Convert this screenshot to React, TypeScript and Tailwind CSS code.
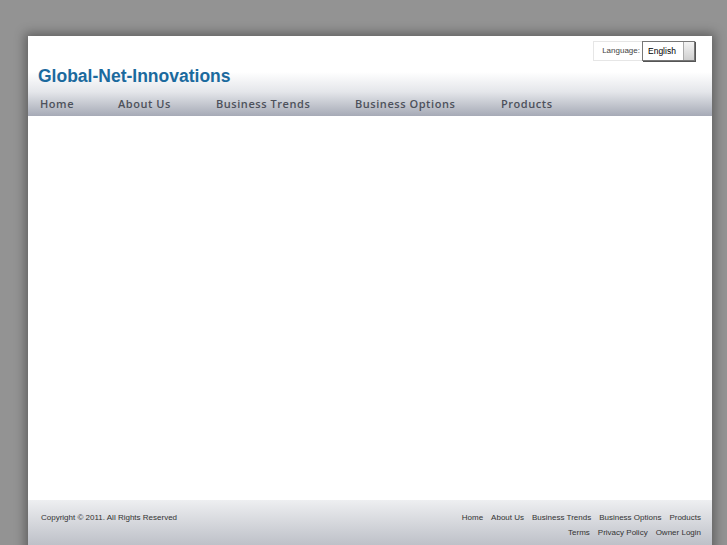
export default function App() {
  const nav = [
    { label: "Home", w: "w-[78px]" },
    { label: "About Us", w: "w-[98px]" },
    { label: "Business Trends", w: "w-[139px]" },
    { label: "Business Options", w: "w-[146px]" },
    { label: "Products", w: "w-auto" },
  ];
  const footerTop = ["Home", "About Us", "Business Trends", "Business Options", "Products"];
  const footerBottom = ["Terms", "Privacy Policy", "Owner Login"];

  return (
    <div className="h-[545px] overflow-hidden bg-[#939393] pt-9 font-['Liberation_Sans',Arial,sans-serif]">
      <div className="mx-[28px] flex h-[540px] w-[684px] flex-col bg-white shadow-[0_0_10px_3px_rgba(0,0,0,0.35)]">
        {/* header */}
        <div className="h-[80px] bg-gradient-to-b from-white from-[45%] via-[#e4e6ea] via-[70%] to-[#a6aab6]">
          <div className="flex justify-end pr-4 pt-[5px]">
            <div className="flex h-[20px] items-center border border-[#e6e6e6] bg-white pl-[8px]">
              <span className="text-[8px] text-[#444]">Language:</span>
              <div className="ml-[2px] flex h-[20px] w-[53px] items-center border border-[#777] bg-white shadow-[1px_1px_0_#555]">
                <span className="pl-[5px] pt-[1px] text-[8.5px] leading-none text-black">English</span>
                <div className="ml-auto h-full w-[11px] border-l border-[#aaa] bg-gradient-to-b from-[#f4f4f4] to-[#cfcfcf]" />
              </div>
            </div>
          </div>
          <div className="pl-[10px] pt-[5px] text-[17.5px] font-bold leading-5 text-[#1b6a9e]">
            Global-Net-Innovations
          </div>
          <div className="flex pl-[12px] pt-[10px] font-['Open_Sans',sans-serif] text-[11px] font-semibold tracking-[0.05em] text-[#4d515b]">
            {nav.map((n) => (
              <span key={n.label} className={n.w}>
                {n.label}
              </span>
            ))}
          </div>
        </div>

        {/* content */}
        <div className="h-[384px] bg-white" />

        {/* footer */}
        <div className="flex flex-1 justify-between bg-gradient-to-b from-[#eeeff1] to-[#9ea2ad] pl-[13px] pr-[11px] pt-[13px] text-[8px] leading-[9px] text-[#333]">
          <span>Copyright © 2011. All Rights Reserved</span>
          <div className="flex flex-col items-end gap-[6px]">
            <div className="flex gap-[8px]">
              {footerTop.map((l) => (
                <span key={l}>{l}</span>
              ))}
            </div>
            <div className="flex gap-[8px]">
              {footerBottom.map((l) => (
                <span key={l}>{l}</span>
              ))}
            </div>
          </div>
        </div>
      </div>
    </div>
  );
}
